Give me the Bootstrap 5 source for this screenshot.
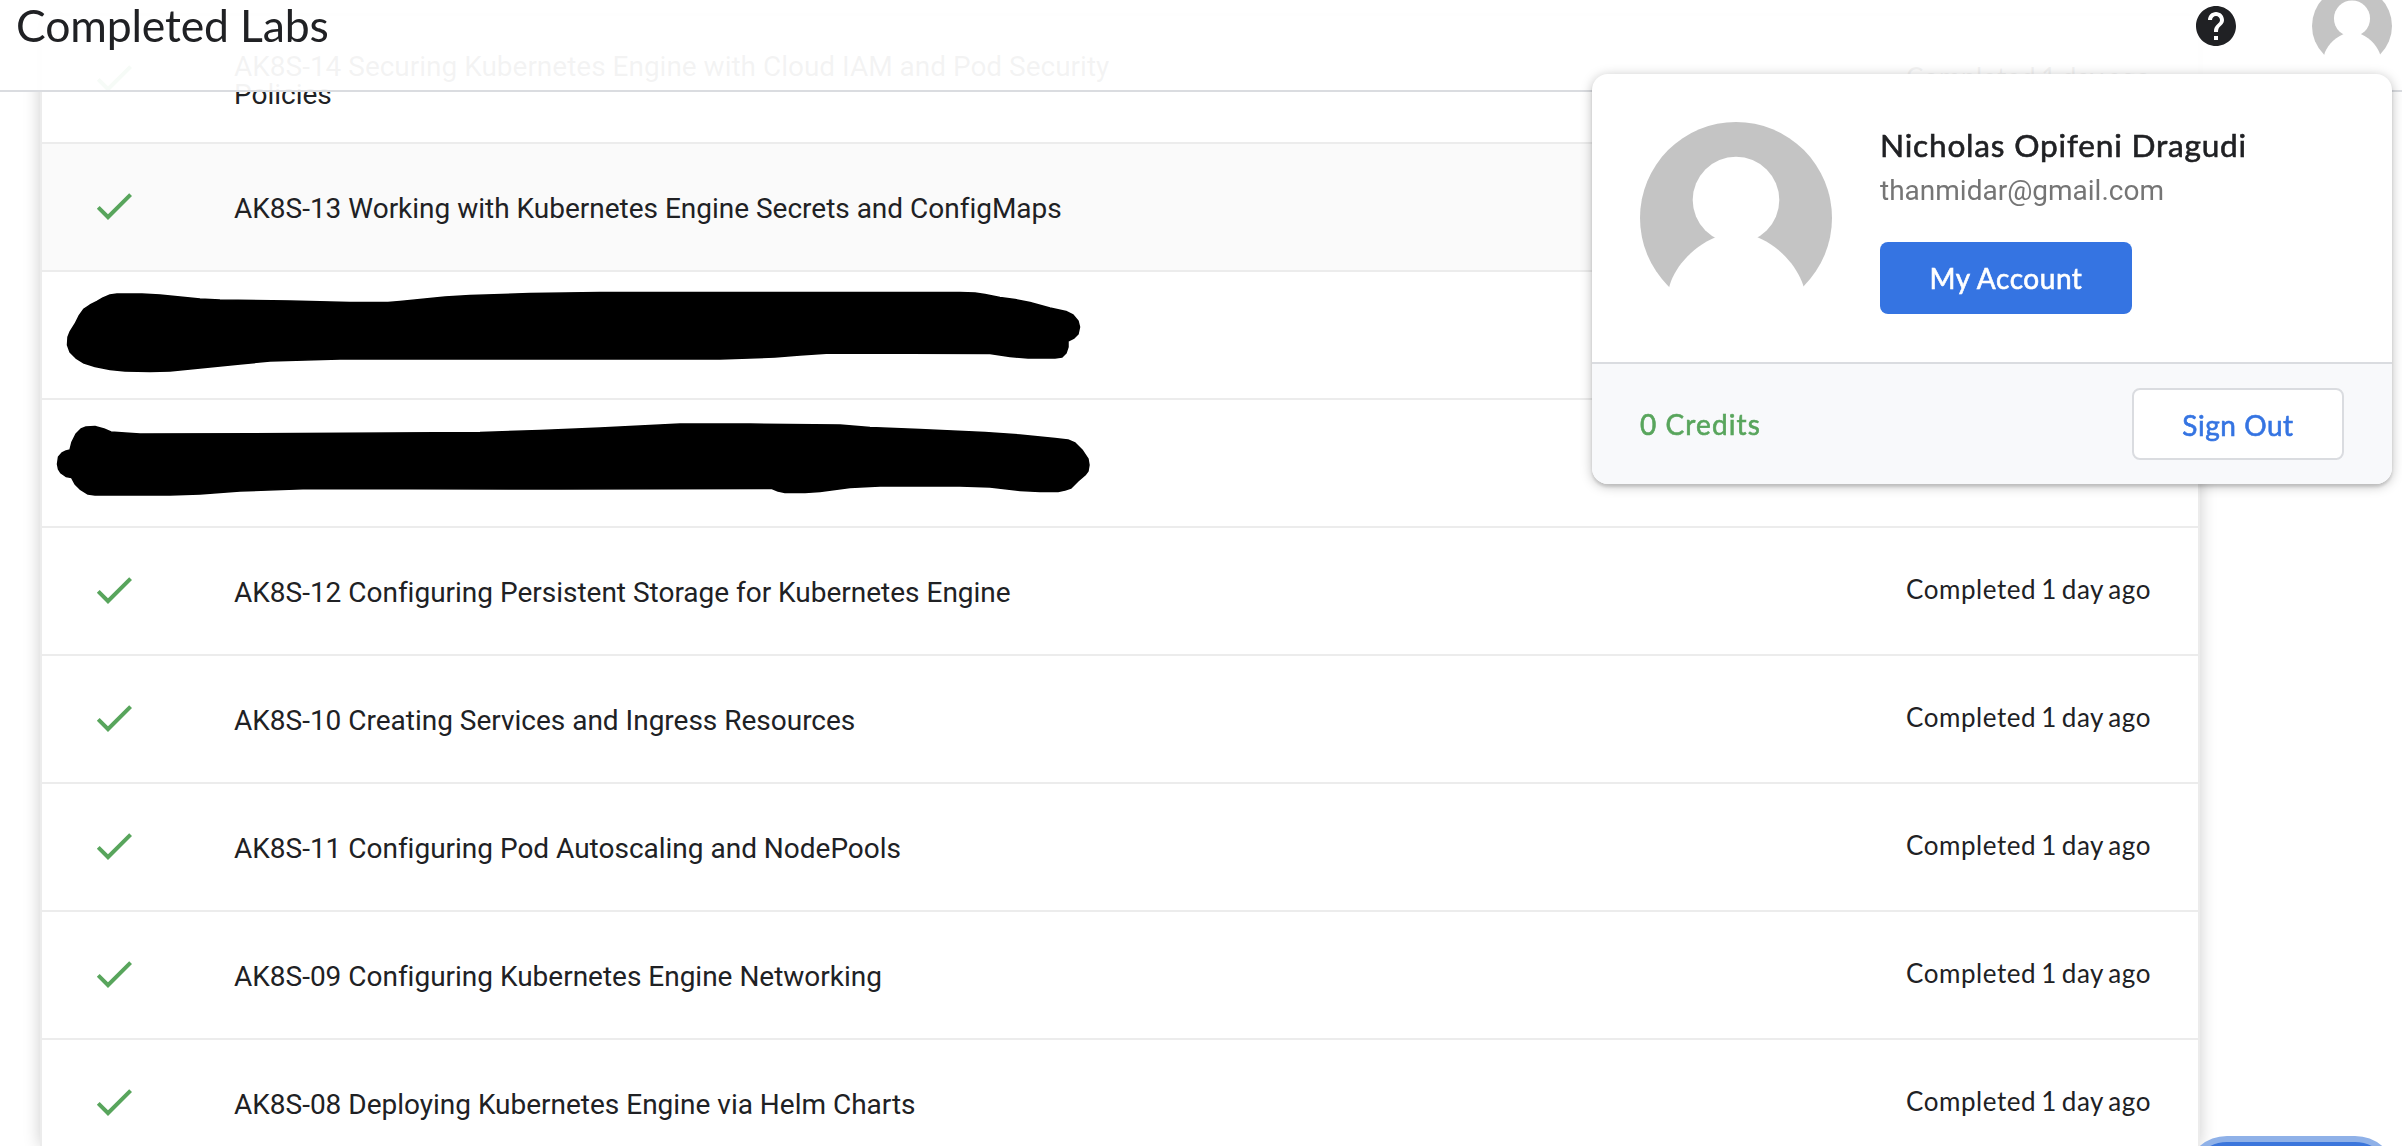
<!DOCTYPE html>
<html lang="en">
<head>
<meta charset="utf-8">
<meta name="viewport" content="width=device-width, initial-scale=1">
<title>Completed Labs</title>
<link href="https://cdn.jsdelivr.net/npm/bootstrap@5.3.0/dist/css/bootstrap.min.css" rel="stylesheet">
<style>
html{overflow:hidden}
body{font-family:Roboto,"Liberation Sans",sans-serif;font-size:28px;line-height:28px;color:#202124;height:1146px;overflow:hidden;background:#fff}
.gs{font-family:Lato,Roboto,sans-serif}
.topbar{height:92px;background:rgba(255,255,255,.95);border-bottom:2px solid #dadce0;z-index:10;padding:0 10px 0 16px}
.page-title{font-size:44.5px;line-height:49px;letter-spacing:-.15px;margin:0}
.topbar-icons{gap:76px;height:52px}
.labs{margin:16px 0 0 40px;width:2160px;height:1130px;overflow:visible;border:solid #ececec;border-width:0 2px;box-shadow:0 0 16px rgba(0,0,0,.2);background:#fff}
.lab-rows{height:1130px;overflow:hidden}
.lab-row{height:128px;border-bottom:2px solid #ececec;padding:0 48px}
.lab-row.hovered{background:#fafafa}
.lab-check{width:48px;height:48px;margin-top:-2px;fill:#58a55c}
.lab-name{margin-left:96px;width:932px;padding-top:4px;letter-spacing:-.01px}
.lab-status{font-size:26px;margin-top:-4px;letter-spacing:.55px;word-spacing:-2.2px;margin-right:-1px}
.scribble{position:absolute;overflow:visible;left:0;top:0;width:1100px;height:126px;stroke:#000;stroke-width:1.5;stroke-linejoin:round}
.account{position:absolute;left:1592px;top:74px;width:800px;height:410px;border-radius:16px;border:0;box-shadow:0 2px 12px rgba(0,0,0,.26),0 3px 3px rgba(0,0,0,.12);z-index:1040;overflow:hidden}
.account-main{height:288px;padding:48px;gap:48px}
.account-foot{height:122px;border-top:2px solid #dadce0;background:#f8f9fb;padding:0 48px}
.user-name{font-size:31.6px;line-height:40px;margin-top:3px;letter-spacing:.8px}
.user-name,.acct-btn,.credits{-webkit-text-stroke:.6px currentColor}
.user-mail{color:#757575;line-height:36px;margin-top:8px}
.btn.acct-btn{height:72px;border-radius:8px;font-size:28px;line-height:28px;letter-spacing:.55px;display:flex;align-items:center;justify-content:center;padding:0}
.btn.acct-my{width:252px;background:#3574e2;color:#fff;margin-top:33px;border:0}
.btn.acct-out{width:212px;background:#fff;color:#3574e2;border:2px solid #dadce0;padding-top:2px}
.credits{color:#58a55c;letter-spacing:1.1px}
.fab{position:absolute;left:2185px;top:1136px;width:212px;height:84px;border-radius:42px;border:6px solid #8fb1e8;background:#3b76dc;z-index:5}
</style>
<script src="https://cdn.jsdelivr.net/npm/bootstrap@5.3.0/dist/js/bootstrap.bundle.min.js"></script>
</head>
<body class="position-relative">
<svg class="d-none">
  <symbol id="check" viewBox="0 0 24 24"><path d="M9 16.17 4.83 12l-1.42 1.41L9 19 21 7l-1.41-1.41z"/></symbol>
  <symbol id="avatar" viewBox="0 0 192 192"><circle cx="96" cy="96" r="96" fill="#c4c4c4"/><circle cx="96" cy="78" r="43.3" fill="#fff"/><path d="M76 115C50 126 33 148 29 166L29 192H164V166C159 148 143 126 117 115Z" fill="#fff"/></symbol>
</svg>

<header class="topbar fixed-top d-flex justify-content-between align-items-start">
  <h1 class="page-title gs fw-normal">Completed Labs</h1>
  <div class="topbar-icons d-flex align-items-center">
    <svg width="40" height="40" viewBox="2 2 20 20"><path fill="#202124" d="M12 2C6.48 2 2 6.48 2 12s4.48 10 10 10 10-4.48 10-10S17.52 2 12 2zm1 17h-2v-2h2v2zm2.07-7.75-.9.92C13.45 12.9 13 13.5 13 15h-2v-.5c0-1.1.45-2.1 1.17-2.83l1.24-1.26c.37-.36.59-.86.59-1.41 0-1.1-.9-2-2-2s-2 .9-2 2H8c0-2.210 1.790-4 4-4s4 1.790 4 4c0 .88-.36 1.680-.93 2.250z"/></svg>
    <svg width="80" height="80"><use href="#avatar"/></svg>
  </div>
</header>

<main class="labs">
 <div class="lab-rows">
  <div class="lab-row d-flex align-items-center"><svg class="lab-check"><use href="#check"/></svg><div class="lab-name">AK8S-14 Securing Kubernetes Engine with Cloud IAM and Pod Security Policies</div><div class="lab-status gs ms-auto">Completed 1 day ago</div></div>
  <div class="lab-row hovered d-flex align-items-center"><svg class="lab-check"><use href="#check"/></svg><div class="lab-name">AK8S-13 Working with Kubernetes Engine Secrets and ConfigMaps</div></div>
  <div class="lab-row position-relative">
    <svg class="scribble" viewBox="42 272 1100 126"><path d="M67.500 345L68 337 70 332 75 324 79 316 84 309 90 305 97 301.500 103 298 110 295 117 294H142L160 295 180 297 200 299 220 300 290 301 350 302.500H388L400 301.500 420 299.500 445 297 470 295.500 530 293.500 600 292.500 800 292.500H960L975 293 985 294.500 1000 297.500 1015 299.500 1030 302.500 1050 308 1066 311.500 1073 315 1078 321 1079.500 327 1078 334 1074 338 1068 341V347L1066 353 1062 357 1055 358H1028L1010 356.500 990 353.500 830 353 800 355 775 357 720 359H340L270 361 240 364 210 367 185 369.500 170 371 150 371.500 125 371 110 369.500 95 366.500 84 363 76 358 70 352Z"/></svg>
  </div>
  <div class="lab-row position-relative">
    <svg class="scribble" viewBox="42 400 1100 126"><path d="M57.500 464L58.500 457 62 453 66 451 70 450 72 442 76 434 81 429 86 427 95 426.500 104 429 111 432 125 433 140 434 300 433.500 480 432.500 540 430.500 600 428 640 426 680 424H750L840 425 870 427.500 920 429.500 985 432.500 1020 435 1055 438.500 1068 440 1075 443 1082 450 1088 459 1089 465 1088 471 1085 475 1078 481 1071 488 1065 490 1058 491.500H1040L1020 490.500 990 487 960 486H880L850 487.500 835 489.500 820 491.500 805 492.500H785L778 491 772 488.500 560 489 310 488.500 240 491 200 494 170 495H95L88 494 80 489 75 484 71.500 477.500 66 476.500 61 473 58.500 469Z"/></svg>
  </div>
  <div class="lab-row d-flex align-items-center"><svg class="lab-check"><use href="#check"/></svg><div class="lab-name">AK8S-12 Configuring Persistent Storage for Kubernetes Engine</div><div class="lab-status gs ms-auto">Completed 1 day ago</div></div>
  <div class="lab-row d-flex align-items-center"><svg class="lab-check"><use href="#check"/></svg><div class="lab-name">AK8S-10 Creating Services and Ingress Resources</div><div class="lab-status gs ms-auto">Completed 1 day ago</div></div>
  <div class="lab-row d-flex align-items-center"><svg class="lab-check"><use href="#check"/></svg><div class="lab-name">AK8S-11 Configuring Pod Autoscaling and NodePools</div><div class="lab-status gs ms-auto">Completed 1 day ago</div></div>
  <div class="lab-row d-flex align-items-center"><svg class="lab-check"><use href="#check"/></svg><div class="lab-name">AK8S-09 Configuring Kubernetes Engine Networking</div><div class="lab-status gs ms-auto">Completed 1 day ago</div></div>
  <div class="lab-row d-flex align-items-center"><svg class="lab-check"><use href="#check"/></svg><div class="lab-name">AK8S-08 Deploying Kubernetes Engine via Helm Charts</div><div class="lab-status gs ms-auto">Completed 1 day ago</div></div>
 </div>
</main>

<div class="fab"></div>

<section class="account card">
  <div class="account-main d-flex">
    <svg width="192" height="192" class="flex-shrink-0"><use href="#avatar"/></svg>
    <div>
      <div class="user-name gs">Nicholas Opifeni Dragudi</div>
      <div class="user-mail">thanmidar@gmail.com</div>
      <button class="btn acct-btn acct-my gs">My Account</button>
    </div>
  </div>
  <div class="account-foot d-flex align-items-center justify-content-between">
    <div class="credits gs">0 Credits</div>
    <button class="btn acct-btn acct-out gs">Sign Out</button>
  </div>
</section>
</body>
</html>
